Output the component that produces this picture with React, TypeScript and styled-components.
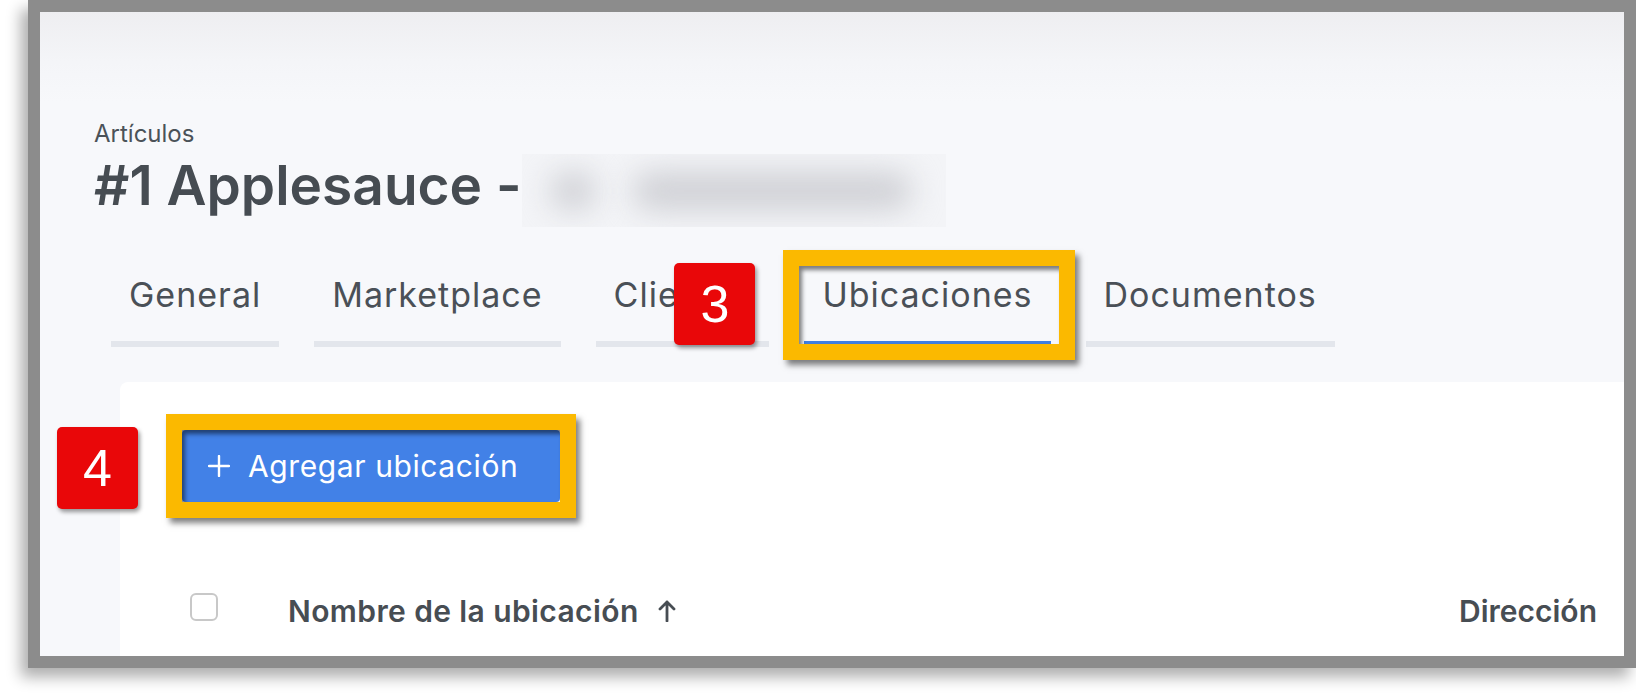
import React from 'react';
import styled, { createGlobalStyle } from 'styled-components';

const GlobalStyle = createGlobalStyle`
  html, body {
    margin: 0;
    padding: 0;
    background: #ffffff;
    overflow: hidden;
  }
  body {
    font-family: Inter, "Open Sans", Arial, sans-serif;
    color: #474d53;
  }
  * {
    box-sizing: border-box;
  }
`;

const Page = styled.div`
  width: 1636px;
  height: 696px;
  padding-left: 28px;
`;

const Frame = styled.div`
  width: 1608px;
  height: 668px;
  border: 12px solid #8c8c8c;
  box-shadow: -7px 9px 14px rgba(0, 0, 0, 0.32);
  background: linear-gradient(#eeeef1 0, #f4f5f8 50px, #f7f8fb 90px, #f7f8fb 100%);
  overflow: hidden;
`;

const Main = styled.main`
  padding: 108px 0 0 54px;
`;

const Crumb = styled.div`
  font-size: 24px;
  line-height: 28px;
  color: #4b5258;
`;

const TitleRow = styled.div`
  display: flex;
  align-items: flex-start;
  height: 60px;
  margin-top: 7px;
`;

const Title = styled.h1`
  margin: 0;
  font-size: 55px;
  line-height: 60px;
  font-weight: 600;
  color: #464c52;
  white-space: nowrap;
`;

const Redacted = styled.div`
  flex: none;
  display: flex;
  align-items: center;
  gap: 36px;
  width: 424px;
  height: 73px;
  margin: -1px 0 0 0;
  padding-left: 28px;
  background: #f3f4f7;
  overflow: hidden;
`;

const Smudge = styled.span<{ $w: number }>`
  display: block;
  width: ${(p) => p.$w}px;
  height: 38px;
  border-radius: 19px;
  background: #cfd0d5;
  filter: blur(15px);
`;

const TabBar = styled.nav`
  display: flex;
  gap: 35px;
  margin: 40px 0 0 17px;
`;

const Tab = styled.div<{ $active?: boolean }>`
  position: relative;
  padding: 20px 18px 26px;
  font-size: 34px;
  line-height: 40px;
  letter-spacing: 1px;
  color: #4a5057;
  white-space: nowrap;
  border-bottom: 6px solid ${(p) => (p.$active ? '#3f7fe2' : '#e3e6ec')};
`;

const Callout = styled.div<{ $inset: string }>`
  position: absolute;
  inset: ${(p) => p.$inset};
  border: 16px solid #fbb900;
  box-shadow: 4px 5px 6px rgba(0, 0, 0, 0.5), inset 3px 4px 4px rgba(0, 0, 0, 0.5);
  pointer-events: none;
  z-index: 2;
`;

const Badge = styled.div`
  position: absolute;
  right: calc(100% + 44px);
  top: -3px;
  width: 81px;
  height: 82px;
  display: flex;
  align-items: center;
  justify-content: center;
  background: #e90709;
  border-radius: 5px;
  box-shadow: 2px 3px 4px rgba(0, 0, 0, 0.4);
  color: #ffffff;
  font-family: "Liberation Sans", Arial, sans-serif;
  font-size: 52px;
  letter-spacing: 0;
  line-height: 1;
`;

const Card = styled.section`
  margin: 35px 0 0 26px;
  height: 400px;
  padding: 48px 0 0 62px;
  background: #ffffff;
  border-radius: 8px 0 0 0;
`;

const ButtonWrap = styled.div`
  position: relative;
  display: inline-block;
`;

const AddButton = styled.button`
  display: flex;
  align-items: center;
  gap: 18px;
  width: 378px;
  height: 72px;
  padding: 0 0 0 26px;
  border: none;
  border-radius: 4px;
  background: #4281e7;
  color: #ffffff;
  font-family: inherit;
  font-size: 30px;
  letter-spacing: 0.6px;
  line-height: 1;
  cursor: pointer;
`;

const HeaderRow = styled.div`
  display: flex;
  align-items: center;
  height: 50px;
  margin-top: 80px;
  padding: 0 27px 0 8px;
`;

const Checkbox = styled.span`
  flex: none;
  width: 28px;
  height: 28px;
  border: 2px solid #c8c8c8;
  border-radius: 6px;
  background: #ffffff;
  margin-right: 70px;
`;

const ColHead = styled.div<{ $right?: boolean }>`
  display: flex;
  align-items: center;
  gap: 19px;
  padding-top: 8px;
  font-size: 30px;
  font-weight: 600;
  letter-spacing: ${(p) => (p.$right ? '0' : '0.4px')};
  color: #474d53;
  margin-left: ${(p) => (p.$right ? 'auto' : '0')};
  white-space: nowrap;
`;

const PlusIcon = () => (
  <svg width="22" height="22" viewBox="0 0 22 22" fill="none">
    <path d="M11 1v20M1 11h20" stroke="#ffffff" strokeWidth="2.4" strokeLinecap="round" />
  </svg>
);

const ArrowUp = () => (
  <svg width="18" height="22" viewBox="0 0 18 22" fill="none">
    <path d="M9 21V2M2 9l7-7 7 7" stroke="#474d53" strokeWidth="2.8" strokeLinecap="round" strokeLinejoin="round" />
  </svg>
);

const tabs = ['General', 'Marketplace', 'Clientes', 'Ubicaciones', 'Documentos'];

const App: React.FC = () => (
  <>
    <GlobalStyle />
    <Page>
      <Frame>
        <Main>
          <Crumb>Artículos</Crumb>
          <TitleRow>
            <Title>#1 Applesauce -</Title>
            <Redacted>
              <Smudge $w={46} />
              <Smudge $w={280} />
            </Redacted>
          </TitleRow>

          <TabBar>
            {tabs.map((tab, i) => (
              <Tab key={tab} $active={i === 3}>
                {tab}
                {i === 3 && (
                  <Callout $inset="-5px -24px -19px -21px">
                    <Badge>3</Badge>
                  </Callout>
                )}
              </Tab>
            ))}
          </TabBar>

          <Card>
            <ButtonWrap>
              <AddButton>
                <PlusIcon />
                Agregar ubicación
              </AddButton>
              <Callout $inset="-16px">
                <Badge>4</Badge>
              </Callout>
            </ButtonWrap>

            <HeaderRow>
              <Checkbox />
              <ColHead>
                Nombre de la ubicación
                <ArrowUp />
              </ColHead>
              <ColHead $right>Dirección</ColHead>
            </HeaderRow>
          </Card>
        </Main>
      </Frame>
    </Page>
  </>
);

export default App;
